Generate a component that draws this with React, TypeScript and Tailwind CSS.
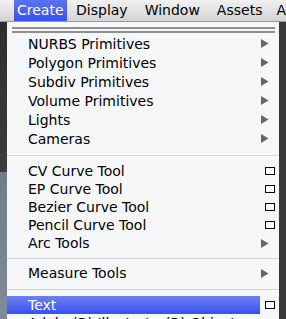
import React from 'react';

type Item =
    | { kind: 'item'; label: string; arrow?: boolean; box?: boolean; active?: boolean; tall?: boolean }
    | { kind: 'sep'; h: string };

const items: Item[] = [
    { kind: 'item', label: 'NURBS Primitives', arrow: true, tall: true },
    { kind: 'item', label: 'Polygon Primitives', arrow: true, tall: true },
    { kind: 'item', label: 'Subdiv Primitives', arrow: true, tall: true },
    { kind: 'item', label: 'Volume Primitives', arrow: true, tall: true },
    { kind: 'item', label: 'Lights', arrow: true, tall: true },
    { kind: 'item', label: 'Cameras', arrow: true, tall: true },
    { kind: 'sep', h: 'h-[14px]' },
    { kind: 'item', label: 'CV Curve Tool', box: true },
    { kind: 'item', label: 'EP Curve Tool', box: true },
    { kind: 'item', label: 'Bezier Curve Tool', box: true },
    { kind: 'item', label: 'Pencil Curve Tool', box: true },
    { kind: 'item', label: 'Arc Tools', arrow: true },
    { kind: 'sep', h: 'h-[12px]' },
    { kind: 'item', label: 'Measure Tools', arrow: true },
    { kind: 'sep', h: 'h-[14px]' },
    { kind: 'item', label: 'Text', box: true, active: true },
    { kind: 'item', label: 'Adobe(R) Illustrator(R) Object...', box: true },
];

function Arrow() {
    return (
        <svg width="8" height="9" viewBox="0 0 8 9" className="block">
            <path d="M0 0 L7.5 4.5 L0 9 Z" fill="#666" />
        </svg>
    );
}

function OptionBox() {
    return <span className="block w-[10px] h-[8px] border border-black bg-white" />;
}

export default function App() {
    return (
        <div
            className="w-[286px] h-[319px] overflow-hidden bg-[#3b3b3b] flex flex-col"
            style={{ fontFamily: '"DejaVu Sans", sans-serif' }}
        >
            <div className="h-[22px] shrink-0 flex items-stretch bg-gradient-to-b from-[#f1f1f1] to-[#d4d4d4] border-b border-[#9a9a9a] text-[14px] text-black">
                <div className="ml-[14px] w-[55px] pl-[3px] flex items-center bg-gradient-to-b from-[#5b72f2] to-[#3550ec] text-white">
                    Create
                </div>
                <div className="ml-[9px] flex items-center">Display</div>
                <div className="ml-[17px] flex items-center">Window</div>
                <div className="ml-[17px] flex items-center">Assets</div>
                <div className="ml-[14px] flex items-center">A</div>
            </div>

            <div className="flex flex-1 min-h-0">
                <div className="w-[7px] shrink-0 flex flex-col">
                    <div className="h-[150px] bg-gradient-to-b from-[#2e2e2e] to-[#3c3c3c]" />
                    <div className="flex-1 bg-gradient-to-b from-[#6f7c8a] to-[#7f8b98]" />
                </div>
                <div className="w-[272px] shrink-0 bg-[#f6f7f8] text-[14px] text-black overflow-hidden">
                    <div className="mt-[5px] ml-[5px] mr-[4px] h-[6px] flex flex-col justify-between">
                        <div className="h-[2px] bg-[#8f8f8f]" />
                        <div className="h-[2px] bg-[#8f8f8f]" />
                    </div>
                    <div className="pt-[1px]">
                        {items.map((it, i) =>
                            it.kind === 'sep' ? (
                                <div key={i} className={`${it.h} flex items-center`}>
                                    <div className="w-full h-px bg-[#d6d6d6]" />
                                </div>
                            ) : (
                                <div key={i} className={`${it.tall ? 'h-[19px]' : 'h-[18px]'} flex items-center`}>
                                    <div
                                        className={`h-full w-[253px] flex items-center pl-[21px] leading-none whitespace-nowrap ${
                                            it.active
                                                ? 'bg-gradient-to-b from-[#6f80f2] to-[#3a4ff0] text-white'
                                                : ''
                                        }`}
                                    >
                                        {it.label}
                                    </div>
                                    <div className="flex-1 flex items-center justify-end pr-[4px]">
                                        {it.arrow && (
                                            <span className="mr-[6px]">
                                                <Arrow />
                                            </span>
                                        )}
                                        {it.box && <OptionBox />}
                                    </div>
                                </div>
                            )
                        )}
                    </div>
                </div>
                <div className="flex-1 bg-[#383838]" />
            </div>
        </div>
    );
}
